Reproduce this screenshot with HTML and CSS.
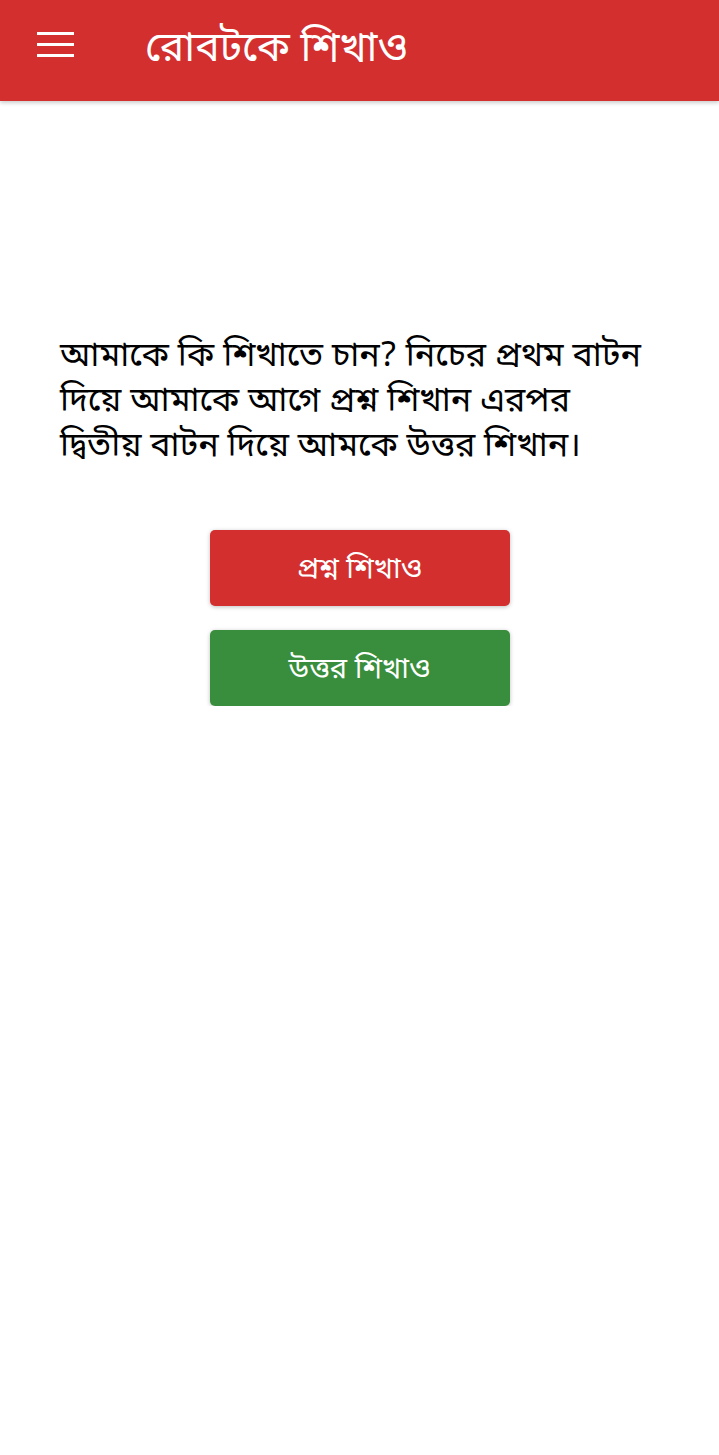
FILE: index.html
```html
<!DOCTYPE html>
<html lang="bn">
<head>
<meta charset="utf-8">
<link rel="stylesheet" href="styles.css">
</head>
<body>
<header class="appbar">
  <button class="menu" aria-label="menu">
    <svg width="37" height="25" viewBox="0 0 37 25"><rect x="0" y="0" width="37" height="3" fill="#fff"/><rect x="0" y="11" width="37" height="3" fill="#fff"/><rect x="0" y="22" width="37" height="3" fill="#fff"/></svg>
  </button>
  <h1 class="title">রোবটকে শিখাও</h1>
</header>
<main class="content">
  <p class="intro">আমাকে কি শিখাতে চান? নিচের প্রথম বাটন দিয়ে আমাকে আগে প্রশ্ন শিখান এরপর দ্বিতীয় বাটন দিয়ে আমকে উত্তর শিখান।</p>
  <div class="actions">
    <button class="btn btn-red">প্রশ্ন শিখাও</button>
    <button class="btn btn-green">উত্তর শিখাও</button>
  </div>
</main>
</body>
</html>
```
FILE: styles.css
```css
* { box-sizing: border-box; }
html, body { margin: 0; padding: 0; background: #fff; }
body { font-family: "Noto Sans Bengali", "Noto Sans", "Lohit Bengali", sans-serif; color: #000; }
.appbar {
  height: 101px;
  background: #d32f2f;
  display: flex;
  align-items: center;
  padding-left: 37px;
  box-shadow: 0 2px 4px rgba(0,0,0,0.2);
}
.menu { background: none; border: 0; padding: 0; margin: 0 0 12px 0; display: flex; width: 37px; height: 25px; }
.title {
  margin: 0 0 0 71px;
  color: #fff;
  font-size: 41px;
  font-weight: 400;
  line-height: 1;
}
.content { padding: 234px 60px 0 60px; }
.intro {
  margin: 0;
  font-size: 34px;
  line-height: 45px;
  color: #000;
}
.actions {
  margin-top: 60px;
  display: flex;
  flex-direction: column;
  align-items: center;
  gap: 24px;
}
.btn {
  width: 300px;
  height: 76px;
  padding: 5px 0 0 0;
  border: 0;
  border-radius: 5px;
  color: #fff;
  font-family: inherit;
  font-size: 29px;
  box-shadow: 0 1px 4px rgba(0,0,0,0.25);
}
.btn-red { background: #d32f2f; }
.btn-green { background: #388e3c; }
```
